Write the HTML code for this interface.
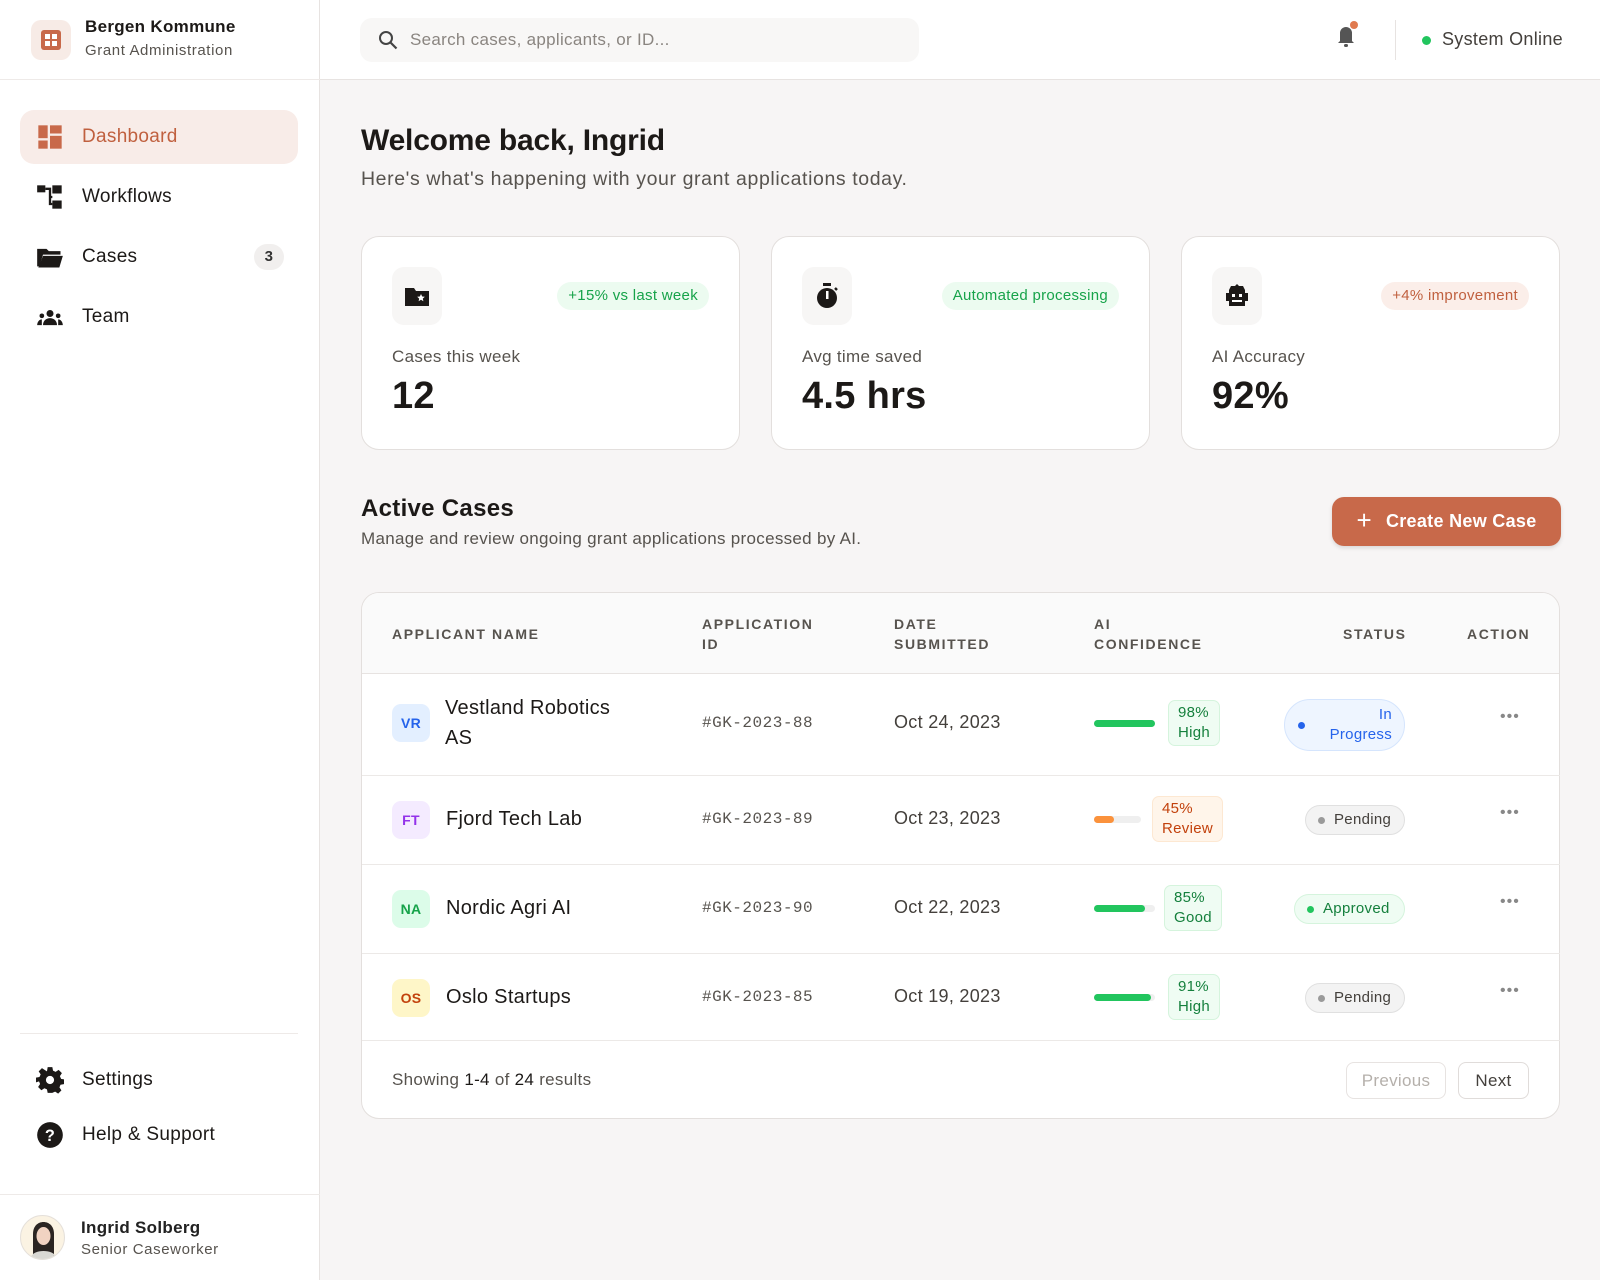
<!DOCTYPE html>
<html><head><meta charset="utf-8"><style>
*{box-sizing:border-box;margin:0;padding:0}
body{width:1600px;height:1280px;background:#f7f5f5;font-family:"Liberation Sans",sans-serif;color:#1c1917;position:relative;overflow:hidden;letter-spacing:.3px}
.abs{position:absolute}
.side{left:0;top:0;width:320px;height:1280px;background:#fff;border-right:1px solid #e7e3e1}
.top{left:320px;top:0;width:1280px;height:80px;background:#fff;border-bottom:1px solid #e7e3e1}
.nav{position:absolute;left:20px;width:278px;height:54px;display:flex;align-items:center;padding-left:16px;font-size:19px;gap:18px}
.nav svg{width:28px;height:28px}
.card{position:absolute;top:236px;width:379px;height:214px;background:#fff;border:1px solid #e3dfdd;border-radius:18px}
.ibox{position:absolute;left:30px;top:30px;width:50px;height:58px;background:#f7f6f5;border-radius:12px;display:flex;align-items:center;justify-content:center}
.pill{position:absolute;right:30px;top:45px;height:28px;border-radius:14px;padding:0 11px;font-size:15px;line-height:28px}
.g{background:#ecfbf0;color:#17a34a}
.lbl{position:absolute;left:30px;top:110px;font-size:17px;color:#57534e}
.val{position:absolute;left:30px;top:138px;font-size:38px;font-weight:bold}
.th{position:absolute;top:614px;font-size:14px;font-weight:bold;letter-spacing:1.6px;color:#57534e;line-height:20px}
.row{position:absolute;left:362px;width:1198px;border-top:1px solid #ece9e7}
.av{position:absolute;left:30px;width:38px;height:38px;border-radius:9px;font-size:14px;font-weight:bold;display:flex;align-items:center;justify-content:center}
.nm{position:absolute;left:84px;font-size:20px;line-height:30px}
.id{position:absolute;left:340px;font-family:"Liberation Mono",monospace;font-size:16px;color:#57534e;letter-spacing:.5px}
.dt{position:absolute;left:532px;font-size:18px;color:#44403c}
.bar{position:absolute;left:732px;height:7px;border-radius:4px;background:#efefef}
.bar i{display:block;height:7px;border-radius:4px}
.conf{position:absolute;font-size:15px;line-height:20px;padding:2px 9px;border-radius:7px;text-align:left}
.st{position:absolute;height:30px;border-radius:15px;font-size:15px;line-height:28px;padding:0 12px 0 28px;border:1px solid #e0e0e0;background:#f3f3f3;color:#44403c}
.dotc{position:absolute;left:12px;top:11px;width:7px;height:7px;border-radius:50%;background:#9a9a9a}
.dots{position:absolute;left:1138px;font-size:16px;color:#888;letter-spacing:1px}
</style></head><body>
<div class="abs side"></div>
<div class="abs" style="left:0;top:79px;width:320px;border-top:1px solid #eeeae8"></div>
<div class="abs" style="left:31px;top:20px;width:40px;height:40px;background:#f7ebe6;border-radius:10px;display:flex;align-items:center;justify-content:center">
<svg width="22" height="22" viewBox="0 0 22 22"><rect x="1" y="1" width="20" height="20" rx="3" fill="#c8694a"/><rect x="5" y="5" width="5" height="5" fill="#fff"/><rect x="12" y="5" width="5" height="5" fill="#fff"/><rect x="5" y="12" width="5" height="5" fill="#fff"/><rect x="12" y="12" width="5" height="5" fill="#fff"/></svg></div>
<div class="abs" style="left:85px;top:17px;font-size:17px;font-weight:bold">Bergen Kommune</div>
<div class="abs" style="left:85px;top:42px;font-size:15px;color:#57534e;letter-spacing:.6px">Grant Administration</div>

<div class="nav" style="top:110px;background:#f8ece8;border-radius:14px;color:#c0603f">
<svg viewBox="0 0 24 24"><rect x="2" y="2" width="8" height="11" fill="#c8694a"/><rect x="12" y="2" width="10" height="7" fill="#c8694a"/><rect x="2" y="15" width="8" height="7" fill="#c8694a"/><rect x="12" y="11" width="10" height="11" fill="#c8694a"/></svg>Dashboard</div>
<div class="nav" style="top:170px"><svg viewBox="0 0 24 24"><rect x="1" y="2" width="7" height="6" fill="#1c1917"/><rect x="14" y="2" width="8" height="7" fill="#1c1917"/><rect x="14" y="15" width="8" height="7" fill="#1c1917"/><path d="M8 5h4v13h2M12 8v4h2" stroke="#1c1917" stroke-width="2" fill="none"/></svg>Workflows</div>
<div class="nav" style="top:230px"><svg viewBox="0 0 24 24"><path d="M1 5h8l2 2h10v3H6L3 20H1z" fill="#1c1917"/><path d="M6 11h17l-3 10H2z" fill="#1c1917"/></svg>Cases</div>
<div class="abs" style="left:254px;top:244px;width:30px;height:26px;border-radius:13px;background:#f1efee;font-size:15px;font-weight:bold;text-align:center;line-height:26px;color:#333">3</div>
<div class="nav" style="top:290px"><svg viewBox="0 0 24 24"><circle cx="12" cy="9" r="3" fill="#1c1917"/><path d="M6 19c0-4 3-6 6-6s6 2 6 6z" fill="#1c1917"/><circle cx="5" cy="11" r="2" fill="#1c1917"/><circle cx="19" cy="11" r="2" fill="#1c1917"/><path d="M1 19c0-3 2-5 4-5v5zM23 19c0-3-2-5-4-5v5z" fill="#1c1917"/></svg>Team</div>

<div class="abs" style="left:20px;top:1033px;width:278px;border-top:1px solid #eeeae8"></div>
<div class="nav" style="top:1053px"><svg viewBox="0 0 24 24"><path d="M10 1h4l.6 3 2.2 1 2.6-1.7 2.8 2.8L20.5 8.7l1 2.3 2.5.5v4l-3 .6-.9 2.2 1.7 2.6-2.8 2.8-2.6-1.7-2.2.9L14 23h-4l-.6-3-2.2-.9-2.6 1.7-2.8-2.8 1.7-2.6-.9-2.2L0 14v-4l3-.6 1-2.2L2.3 4.6l2.8-2.8L7.7 3.5 9.4 4.6z" fill="#1c1917"/><circle cx="12" cy="12" r="3.5" fill="#fff"/></svg>Settings</div>
<div class="nav" style="top:1108px"><svg viewBox="0 0 24 24"><circle cx="12" cy="12" r="11" fill="#1c1917"/><text x="12" y="17" font-size="14" font-weight="bold" fill="#fff" text-anchor="middle" font-family="Liberation Sans">?</text></svg>Help &amp; Support</div>
<div class="abs" style="left:0;top:1194px;width:320px;border-top:1px solid #eeeae8"></div>
<div class="abs" style="left:20px;top:1215px;width:45px;height:45px;border-radius:50%;background:#fbf3e3;border:1px solid #e5e0da;overflow:hidden">
<svg width="45" height="45" viewBox="0 0 45 45"><path d="M12 40V18c0-8 5-12 10.5-12S33 10 33 18v22z" fill="#2b2522"/><ellipse cx="22.5" cy="20" rx="7" ry="9" fill="#f1d3c2"/><path d="M8 45c2-8 8-10 14.5-10S35 37 37 45z" fill="#d9d8d3"/></svg></div>
<div class="abs" style="left:81px;top:1218px;font-size:17px;font-weight:bold;color:#222">Ingrid Solberg</div>
<div class="abs" style="left:81px;top:1241px;font-size:15px;color:#57534e;letter-spacing:.6px">Senior Caseworker</div>

<div class="abs top"></div>
<div class="abs" style="left:360px;top:18px;width:559px;height:44px;background:#f8f7f6;border-radius:12px"></div>
<svg class="abs" style="left:377px;top:29px" width="22" height="22" viewBox="0 0 22 22"><circle cx="9" cy="9" r="6" stroke="#444" stroke-width="2" fill="none"/><path d="M13.5 13.5l6 6" stroke="#444" stroke-width="2.2"/></svg>
<div class="abs" style="left:410px;top:30px;font-size:17px;color:#8a8580">Search cases, applicants, or ID...</div>
<svg class="abs" style="left:1332px;top:20px" width="30" height="30" viewBox="0 0 30 30"><path d="M8 21v-8a6 6 0 0112 0v8l2 2H6z" fill="#555"/><rect x="12" y="24" width="4" height="3" rx="1.5" fill="#555"/><circle cx="22" cy="5" r="4" fill="#e07a4f"/></svg>
<div class="abs" style="left:1395px;top:20px;height:40px;border-left:1px solid #e7e3e1"></div>
<div class="abs" style="left:1422px;top:36px;width:9px;height:9px;border-radius:50%;background:#22c55e"></div>
<div class="abs" style="left:1442px;top:29px;font-size:18px;color:#44403c">System Online</div>

<div class="abs" style="left:361px;top:124px;font-size:30px;font-weight:bold;letter-spacing:-.2px">Welcome back, Ingrid</div>
<div class="abs" style="left:361px;top:168px;font-size:19.5px;color:#57534e;letter-spacing:.6px">Here's what's happening with your grant applications today.</div>

<div class="card" style="left:361px"><div class="ibox"><svg width="26" height="24" viewBox="0 0 26 24"><path d="M1 4h9l2 3h13v15H1z" fill="#1c1917"/><path d="M17 10l1.2 2.5 2.6.3-2 1.8.6 2.6-2.4-1.4-2.4 1.4.6-2.6-2-1.8 2.6-.3z" fill="#fff"/></svg></div><div class="pill g">+15% vs last week</div><div class="lbl">Cases this week</div><div class="val">12</div></div>
<div class="card" style="left:771px"><div class="ibox"><svg width="26" height="28" viewBox="0 0 26 28"><rect x="9" y="1" width="8" height="3" fill="#1c1917"/><circle cx="13" cy="16" r="10" fill="#1c1917"/><rect x="12" y="9" width="2.5" height="8" fill="#fff"/><path d="M21 6l2 2" stroke="#1c1917" stroke-width="2.5"/></svg></div><div class="pill g">Automated processing</div><div class="lbl">Avg time saved</div><div class="val">4.5 hrs</div></div>
<div class="card" style="left:1181px"><div class="ibox"><svg width="28" height="26" viewBox="0 0 28 26"><path d="M8 3h4l2-2 2 2h4l2 4v3h3v8h-3v5H6v-5H3v-8h3V7z" fill="#1c1917"/><rect x="9" y="11" width="3" height="3" fill="#fff"/><rect x="16" y="11" width="3" height="3" fill="#fff"/><rect x="9" y="17" width="10" height="2" fill="#fff"/></svg></div><div class="pill" style="background:#fbeee9;color:#c0603f">+4% improvement</div><div class="lbl">AI Accuracy</div><div class="val">92%</div></div>

<div class="abs" style="left:361px;top:495px;font-size:24px;font-weight:bold">Active Cases</div>
<div class="abs" style="left:361px;top:529px;font-size:17px;color:#57534e">Manage and review ongoing grant applications processed by AI.</div>
<div class="abs" style="left:1332px;top:497px;width:229px;height:49px;border-radius:12px;background:#c8694a;color:#fff;font-size:18px;font-weight:bold;display:flex;align-items:center;justify-content:center;gap:14px;box-shadow:0 2px 4px rgba(0,0,0,.12)"><span style="font-size:26px;font-weight:normal;margin-top:-3px">+</span>Create New Case</div>

<div class="abs" style="left:361px;top:592px;width:1199px;height:527px;background:#fff;border:1px solid #e3dfdd;border-radius:18px;overflow:hidden">
<div style="height:81px;background:#fafafa;border-bottom:1px solid #e7e3e1"></div></div>
<div class="th" style="left:392px;top:624px">APPLICANT NAME</div>
<div class="th" style="left:702px">APPLICATION<br>ID</div>
<div class="th" style="left:894px">DATE<br>SUBMITTED</div>
<div class="th" style="left:1094px">AI<br>CONFIDENCE</div>
<div class="th" style="left:1343px;top:624px">STATUS</div>
<div class="th" style="left:1467px;top:624px">ACTION</div>

<div class="row" style="top:674px;height:101px;border-top:none">
<div class="av" style="top:30px;background:#e3efff;color:#2563eb">VR</div>
<div class="nm" style="left:83px;top:19px">Vestland Robotics<br>AS</div>
<div class="id" style="top:40px">#GK-2023-88</div><div class="dt" style="top:38px">Oct 24, 2023</div>
<div class="bar" style="top:46px;width:61px"><i style="width:61px;background:#22c55e"></i></div>
<div class="conf" style="left:806px;top:26px;background:#effcf3;border:1px solid #d5f4dd;color:#15803d">98%<br>High</div>
<div class="st" style="left:922px;top:25px;width:121px;height:52px;border-radius:26px;background:#eef5ff;border-color:#d5e5fd;color:#2563eb;line-height:20px;padding:5px 12px 0 40px;text-align:right">In<br>Progress</div>
<div class="abs" style="left:936px;top:48px;width:7px;height:7px;border-radius:50%;background:#2563eb"></div>
<div class="dots" style="top:34px">•••</div></div>

<div class="row" style="top:775px;height:89px">
<div class="av" style="top:25px;background:#f4ebff;color:#9333ea">FT</div>
<div class="nm" style="top:28px">Fjord Tech Lab</div>
<div class="id" style="top:34px">#GK-2023-89</div><div class="dt" style="top:32px">Oct 23, 2023</div>
<div class="bar" style="top:40px;width:47px"><i style="width:20px;background:#fb923c"></i></div>
<div class="conf" style="left:790px;top:20px;background:#fff5ea;border:1px solid #fde8d2;color:#c2410c">45%<br>Review</div>
<div class="st" style="left:943px;top:29px;width:100px"><span class="dotc"></span>Pending</div>
<div class="dots" style="top:28px">•••</div></div>

<div class="row" style="top:864px;height:89px">
<div class="av" style="top:25px;background:#dcfce9;color:#16a34a">NA</div>
<div class="nm" style="top:28px">Nordic Agri AI</div>
<div class="id" style="top:34px">#GK-2023-90</div><div class="dt" style="top:32px">Oct 22, 2023</div>
<div class="bar" style="top:40px;width:61px"><i style="width:51px;background:#22c55e"></i></div>
<div class="conf" style="left:802px;top:20px;background:#effcf3;border:1px solid #d5f4dd;color:#15803d">85%<br>Good</div>
<div class="st" style="left:932px;top:29px;width:111px;background:#effcf3;border-color:#d5f4dd;color:#15803d"><span class="dotc" style="background:#22c55e"></span>Approved</div>
<div class="dots" style="top:28px">•••</div></div>

<div class="row" style="top:953px;height:88px">
<div class="av" style="top:25px;background:#fef6c8;color:#c2410c">OS</div>
<div class="nm" style="top:28px">Oslo Startups</div>
<div class="id" style="top:34px">#GK-2023-85</div><div class="dt" style="top:32px">Oct 19, 2023</div>
<div class="bar" style="top:40px;width:61px"><i style="width:57px;background:#22c55e"></i></div>
<div class="conf" style="left:806px;top:20px;background:#effcf3;border:1px solid #d5f4dd;color:#15803d">91%<br>High</div>
<div class="st" style="left:943px;top:29px;width:100px"><span class="dotc"></span>Pending</div>
<div class="dots" style="top:28px">•••</div></div>

<div class="row" style="top:1040px;height:1px"></div>
<div class="abs" style="left:392px;top:1070px;font-size:17px;color:#57534e">Showing <span style="color:#1c1917">1-4</span> of <span style="color:#1c1917">24</span> results</div>
<div class="abs" style="left:1346px;top:1062px;width:100px;height:37px;border:1px solid #e7e3e1;border-radius:8px;font-size:17px;color:#b5b0ab;text-align:center;line-height:35px">Previous</div>
<div class="abs" style="left:1458px;top:1062px;width:71px;height:37px;border:1px solid #e0dcda;border-radius:8px;font-size:17px;color:#44403c;text-align:center;line-height:35px">Next</div>
</body></html>
